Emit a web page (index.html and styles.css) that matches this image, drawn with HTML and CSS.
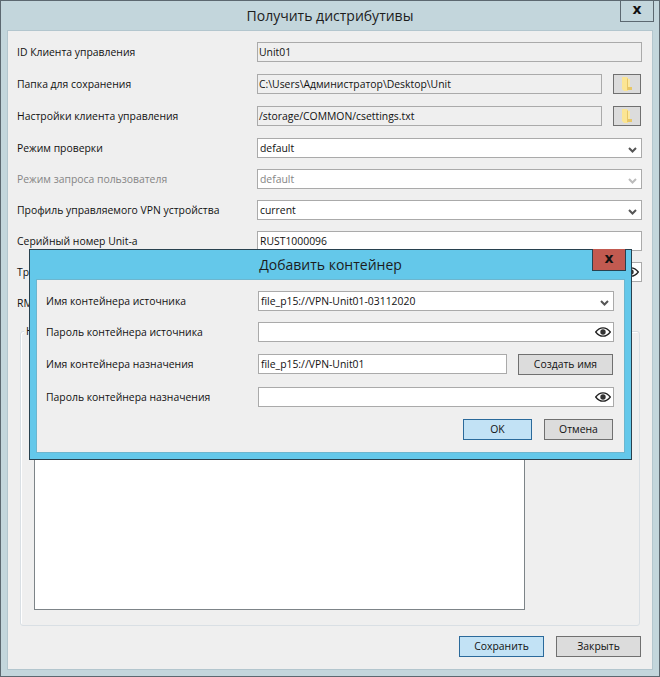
FILE: index.html
```html
<!DOCTYPE html>
<html lang="ru">
<head>
<meta charset="utf-8">
<title>Получить дистрибутивы</title>
<link rel="stylesheet" href="styles.css">
</head>
<body>
<div class="window">
  <header class="titlebar">
    <span class="title">Получить дистрибутивы</span>
    <span class="close">x</span>
  </header>
  <main class="content">
    <div class="rows">
      <div class="row"><label>ID Клиента управления</label><div class="field ro">Unit01</div></div>
      <div class="row"><label>Папка для сохранения</label><div class="field ro short">C:\Users\Администратор\Desktop\Unit</div><button class="folder"><svg viewBox="0 0 10 14" width="10" height="14"><path d="M0 0h5l1 1v13H2l-2-2z" fill="#fbe594"/><path d="M5 1l1 1v8h4v3H5z" fill="#e8c768"/><path d="M6 2h2v8H6z" fill="#fbe9a4"/></svg></button></div>
      <div class="row"><label>Настройки клиента управления</label><div class="field ro short">/storage/COMMON/csettings.txt</div><button class="folder"><svg viewBox="0 0 10 14" width="10" height="14"><path d="M0 0h5l1 1v13H2l-2-2z" fill="#fbe594"/><path d="M5 1l1 1v8h4v3H5z" fill="#e8c768"/><path d="M6 2h2v8H6z" fill="#fbe9a4"/></svg></button></div>
      <div class="row"><label>Режим проверки</label><div class="field combo">default<svg class="chev" viewBox="0 0 9 6" width="9" height="6"><path d="M1 1l3.500 3.500L8 1" fill="none" stroke="#555" stroke-width="2"/></svg></div></div>
      <div class="row tight disabled"><label>Режим запроса пользователя</label><div class="field combo">default<svg class="chev" viewBox="0 0 9 6" width="9" height="6"><path d="M1 1l3.500 3.500L8 1" fill="none" stroke="#bbb" stroke-width="2"/></svg></div></div>
      <div class="row tight"><label>Профиль управляемого VPN устройства</label><div class="field combo">current<svg class="chev" viewBox="0 0 9 6" width="9" height="6"><path d="M1 1l3.500 3.500L8 1" fill="none" stroke="#555" stroke-width="2"/></svg></div></div>
      <div class="row tight"><label>Серийный номер Unit-а</label><div class="field">RUST1000096</div></div>
      <div class="row tight"><label>Тр</label><div class="field combo"><svg class="eye" viewBox="0 0 16 10" width="16" height="10"><path d="M.7 5C3 2 5.500.8 8 .8S13 2 15.300 5C13 8 10.500 9.200 8 9.200S3 8 .7 5z" fill="#fff" stroke="#222" stroke-width="1.300"/><circle cx="8" cy="5" r="2.700" fill="#333"/></svg></div></div>
      <div class="row tight"><label>RM</label></div>
    </div>
    <section class="group">
      <span class="legend">Н</span>
      <div class="list"></div>
    </section>
    <footer class="actions">
      <button class="btn primary">Сохранить</button>
      <button class="btn">Закрыть</button>
    </footer>
  </main>
</div>

<div class="dialog">
  <header class="dlg-title">
    <span class="dlg-caption">Добавить контейнер</span>
    <span class="dlg-close">x</span>
  </header>
  <div class="dlg-body">
    <div class="drow"><label>Имя контейнера источника</label><div class="field combo">file_p15://VPN-Unit01-03112020<svg class="chev" viewBox="0 0 9 6" width="9" height="6"><path d="M1 1l3.500 3.500L8 1" fill="none" stroke="#555" stroke-width="2"/></svg></div></div>
    <div class="drow"><label>Пароль контейнера источника</label><div class="field combo"><svg class="eye" viewBox="0 0 16 10" width="16" height="10"><path d="M.7 5C3 2 5.500.8 8 .8S13 2 15.300 5C13 8 10.500 9.200 8 9.200S3 8 .7 5z" fill="#fff" stroke="#222" stroke-width="1.300"/><circle cx="8" cy="5" r="2.700" fill="#333"/></svg></div></div>
    <div class="drow push tall"><label>Имя контейнера назначения</label><div class="field grow">file_p15://VPN-Unit01</div><button class="btn make">Создать имя</button></div>
    <div class="drow push"><label>Пароль контейнера назначения</label><div class="field combo"><svg class="eye" viewBox="0 0 16 10" width="16" height="10"><path d="M.7 5C3 2 5.500.8 8 .8S13 2 15.300 5C13 8 10.500 9.200 8 9.200S3 8 .7 5z" fill="#fff" stroke="#222" stroke-width="1.300"/><circle cx="8" cy="5" r="2.700" fill="#333"/></svg></div></div>
    <div class="dlg-actions">
      <button class="btn primary dlg-btn">OK</button>
      <button class="btn dlg-btn">Отмена</button>
    </div>
  </div>
</div>
</body>
</html>
```
FILE: styles.css
```css
* { box-sizing: border-box; }
html, body { margin: 0; padding: 0; }
body {
  width: 660px; height: 677px; position: relative; overflow: hidden;
  font-family: "Open Sans", "Noto Sans", sans-serif; font-size: 10.4px; color: #111;
}
.window {
  width: 660px; height: 677px; display: flex; flex-direction: column;
  background: #c3d6dc; border: 1px solid #5c6870; padding: 0 7px 7px 7px;
}
.titlebar { height: 30px; flex: none; position: relative; display: flex; justify-content: center; align-items: center; padding-bottom: 1px; }
.title { font-size: 14px; color: #1c1c1c; }
.close {
  position: absolute; right: -2px; top: -1px; width: 34px; height: 22px;
  border: 1px solid #5c6870; border-top: 0; display: flex; align-items: center; justify-content: center;
  font: bold 14px "DejaVu Sans", sans-serif; color: #111; padding-bottom: 3px;
}
.content { flex: 1; background: #efefef; display: flex; flex-direction: column; padding: 11px 10px 0 9px; position: relative; box-shadow: 0 0 0 1px rgba(150,170,180,.35); }
.rows { display: flex; flex-direction: column; gap: 12px; }
.row { display: flex; align-items: center; height: 20px; }
.row.tight { margin-top: -1px; }
.row label { width: 240px; flex: none; padding-bottom: 1px; }
.field {
  flex: 1; height: 20px; background: #fff; border: 1px solid #aaa; padding: 0 2px 1px;
  display: flex; align-items: center; position: relative; color: #111; white-space: nowrap;
}
.field.ro { background: #efefef; padding-left: 1px; }
.row .field.short { flex: none; width: 345px; }
.folder {
  width: 28px; height: 20px; margin-left: 11px; padding: 0; background: #dcdcdc; border: 1px solid #707070;
  display: flex; align-items: center; justify-content: center;
}
.disabled label, .disabled .field { color: #858585; }
.chev { position: absolute; right: 4px; top: 8px; }
.eye { position: absolute; right: 2px; top: 4px; }
.group {
  margin: 18px 0 0 3px; height: 295px; border: 1px solid #d9dfe4; border-radius: 3px; position: relative; padding: 0 0 15px 13px;
  flex: none; width: 620px; display: flex; box-shadow: inset 1px 1px 0 #fff;
}
.legend { position: absolute; left: 3px; top: -8px; background: #efefef; padding: 0 2px; }
.list { width: 491px; margin-top: 20px; background: #fff; border: 1px solid #7d8488; }
.actions { display: flex; justify-content: flex-end; gap: 12px; margin-top: 10px; padding-right: 1px; }
.btn {
  width: 85px; height: 21px; padding: 0 0 1px; background: #dcdcdc; border: 1px solid #707070;
  font: inherit; color: #111;
}
.btn.primary { background: #c2e2f5; border-color: #2b6a9b; }

.dialog {
  position: absolute; left: 29px; top: 249px; width: 603px; height: 211px;
  background: #64c8ea; border: 1px solid #28414f; padding: 0 7px 7px 7px; display: flex; flex-direction: column;
}
.dlg-title { height: 30px; flex: none; position: relative; display: flex; justify-content: center; align-items: center; padding-bottom: 1px; }
.dlg-caption { font-size: 14px; color: #1c1c1c; }
.dlg-close {
  position: absolute; right: -2px; top: -1px; width: 34px; height: 22px; background: #c25a50;
  border: 1px solid #28414f; border-top: 0; display: flex; align-items: center; justify-content: center;
  font: bold 14px "DejaVu Sans", sans-serif; color: #111; padding-bottom: 3px;
}
.dlg-body { flex: 1; background: #efefef; padding: 11px 10px 0 9px; display: flex; flex-direction: column; gap: 11px; box-shadow: 0 0 0 1px rgba(120,160,175,.45); }
.drow { display: flex; align-items: center; height: 20px; }
.drow.push { margin-top: 1px; }
.drow.tall { height: 21px; align-items: flex-start; }
.drow label { width: 212px; flex: none; align-self: center; padding-bottom: 1px; }
.drow .btn.make { width: 95px; flex: none; margin: 0 1px 0 11px; }
.dlg-actions { display: flex; justify-content: flex-end; gap: 12px; margin-top: 1px; padding-right: 1px; }
.btn.dlg-btn { width: 69px; }
```
